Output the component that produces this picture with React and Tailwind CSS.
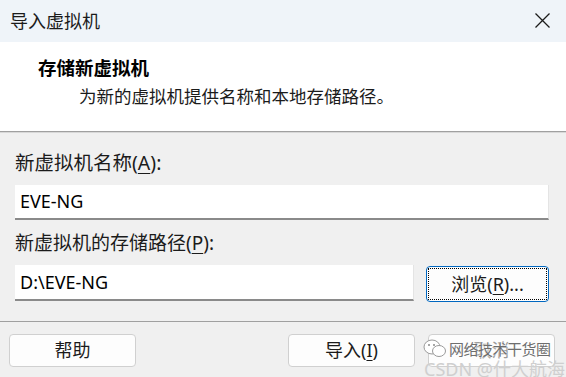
import React from "react";

const font = { fontFamily: "'Noto Sans', 'Noto Sans CJK SC', sans-serif" };

function Btn({ children, className = "" }) {
  return (
    <div
      className={
        "h-[33px] w-[127px] flex items-center justify-center rounded-[4px] border border-[#d0d0d0] bg-[#fdfdfd] text-[18px] text-[#1b1b1b] " +
        className
      }
    >
      {children}
    </div>
  );
}

export default function App() {
  return (
    <div
      className="relative w-[566px] h-[377px] bg-[#f0f0f0] overflow-hidden flex flex-col text-[#1b1b1b]"
      style={font}
    >
      {/* Title bar */}
      <div className="h-[42px] bg-[#eff4f9] flex items-center justify-between pl-[10px] pr-[16px] shrink-0">
        <span className="text-[18px] leading-none">导入虚拟机</span>
        <svg width="15" height="15" viewBox="0 0 15 15" className="mt-[-2px]">
          <path d="M0.5 0.5 L14.5 14.5 M14.5 0.5 L0.5 14.5" stroke="#1b1b1b" strokeWidth="1.3" fill="none" />
        </svg>
      </div>

      {/* Header */}
      <div className="h-[89px] bg-white shrink-0 pl-[38px] pt-[13px]">
        <div className="text-[18.5px] font-bold leading-[26px] text-black">存储新虚拟机</div>
        <div className="ml-[41px] mt-[2px] text-[17.5px] leading-[26px] text-[#1b1b1b]">
          为新的虚拟机提供名称和本地存储路径。
        </div>
      </div>
      <div className="h-px bg-[#a0a0a0] shrink-0" />
      <div className="h-px bg-[#d8d8d8] shrink-0" />

      {/* Body */}
      <div className="flex-1 flex flex-col px-[15px] pt-[17px]">
        <div className="h-[26px] flex items-center text-[19.5px]">
          新虚拟机名称(<span className="underline underline-offset-[3px]">A</span>):
        </div>
        <div className="mt-[9px] h-[35px] w-[534px] bg-white border-b-2 border-[#8a8a8a] border-r border-r-[#e4e4e4] flex items-center pl-[5px] text-[18px] text-black">
          EVE-NG
        </div>
        <div className="mt-[10px] h-[26px] flex items-center text-[19px]">
          新虚拟机的存储路径(<span className="underline underline-offset-[3px]">P</span>):
        </div>
        <div className="mt-[9px] flex items-start justify-between w-[534px]">
          <div className="h-[36px] w-[399px] bg-white border-b-2 border-[#8a8a8a] border-r border-r-[#e4e4e4] flex items-center pl-[5px] text-[18px] text-black">
            D:\EVE-NG
          </div>
          <div className="h-[36px] w-[123px] rounded-[4px] border border-[#0067c0] bg-[#fdfdfd] p-[1px] mt-[1px]">
            <div className="h-full w-full border border-dotted border-black flex items-center justify-center text-[18px]">
              浏览(<span className="underline underline-offset-[3px]">R</span>)...
            </div>
          </div>
        </div>
      </div>

      <div className="h-px bg-[#a0a0a0] shrink-0" />
      {/* Footer */}
      <div className="h-[55px] shrink-0 flex items-start pt-[12px] pl-[9px] pr-[11px]">
        <Btn>帮助</Btn>
        <div className="flex-1" />
        <Btn className="mr-[13px]">
          导入(<span className="underline underline-offset-[3px]">I</span>)
        </Btn>
        <Btn className="text-[#9a9a9a]">取消</Btn>
      </div>

      {/* Watermark overlay */}
      <div className="absolute left-[423px] top-[338px] flex items-center pointer-events-none">
        <svg width="24" height="22" viewBox="0 0 24 22">
          <ellipse cx="9" cy="9" rx="8" ry="7" fill="#ffffff" stroke="#9a9a9a" strokeWidth="1" />
          <ellipse cx="16" cy="13" rx="6.5" ry="5.5" fill="#ffffff" stroke="#9a9a9a" strokeWidth="1" />
          <circle cx="6" cy="7" r="1" fill="#8a8a8a" />
          <circle cx="11" cy="7" r="1" fill="#8a8a8a" />
        </svg>
        <span
          className="ml-[2px] text-[15px] text-[#6e6e6e] tracking-[-0.5px]"
          style={{ textShadow: "0 0 2px #ffffff, 0 0 2px #ffffff" }}
        >
          网络技术干货圈
        </span>
      </div>
      <div className="absolute left-[424px] top-[356px] text-[18px] text-[#cfcfcf] pointer-events-none">
        CSDN @什大航海
      </div>
    </div>
  );
}
